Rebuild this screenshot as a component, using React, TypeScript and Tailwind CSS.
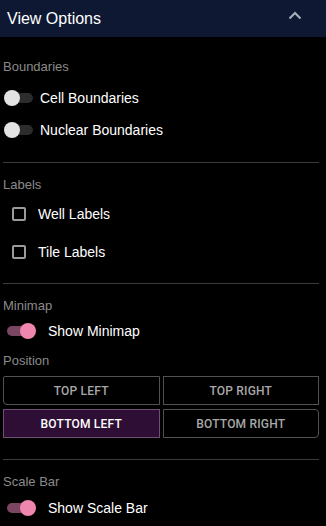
import { useState } from 'react';

const Toggle = ({ on, onClick }: { on: boolean; onClick: () => void }) => (
  <button onClick={onClick} className="relative w-[30px] h-[18px] shrink-0">
    <span
      className={`absolute left-[2px] top-[4px] w-[27px] h-[10px] rounded-full ${
        on ? 'bg-[#7b4662]' : 'bg-[#2c2c2c]'
      }`}
    />
    <span
      className={`absolute top-[1px] w-[16px] h-[16px] rounded-full ${
        on ? 'left-[15px] bg-[#ef86ae]' : 'left-0 bg-[#e3e3e3]'
      }`}
    />
  </button>
);

const Check = ({ checked, onClick }: { checked: boolean; onClick: () => void }) => (
  <button
    onClick={onClick}
    className={`w-[14px] h-[14px] rounded-[2px] border-2 shrink-0 ${
      checked ? 'border-[#ef86ae] bg-[#ef86ae]' : 'border-[#9a9a9a]'
    }`}
  />
);

const SectionLabel = ({ children }: { children: string }) => (
  <div className="h-[16px] leading-[16px] text-[13px] text-[#8a8a8a]">{children}</div>
);

const Divider = () => <div className="h-px bg-[#3b3b3b] mr-[4px]" />;

const positions = ['TOP LEFT', 'TOP RIGHT', 'BOTTOM LEFT', 'BOTTOM RIGHT'];

export default function App() {
  const [cell, setCell] = useState(false);
  const [nuclear, setNuclear] = useState(false);
  const [well, setWell] = useState(false);
  const [tile, setTile] = useState(false);
  const [minimap, setMinimap] = useState(true);
  const [scaleBar, setScaleBar] = useState(true);
  const [position, setPosition] = useState('BOTTOM LEFT');

  // odd corner rounding as in the original button group
  const corners: Record<string, string> = {
    'TOP LEFT': 'rounded-bl-[4px] rounded-tl-[2px]',
    'TOP RIGHT': '',
    'BOTTOM LEFT': '',
    'BOTTOM RIGHT': 'rounded-r-[4px]',
  };

  return (
    <div
      className="w-[326px] h-[526px] bg-black text-white overflow-hidden"
      style={{ fontFamily: '"Liberation Sans", Arial, sans-serif' }}
    >
      <div className="h-[37px] bg-[#0e1833] flex items-center justify-between pl-[7px] pr-[24px]">
        <span className="text-[16px] font-medium">View Options</span>
        <svg width="14" height="9" viewBox="0 0 14 9" className="mt-[-6px]">
          <polyline points="1.5,7.5 7,2 12.5,7.5" fill="none" stroke="#a9aebb" strokeWidth="2" />
        </svg>
      </div>

      <div className="pl-[3px] pr-[3px]">
        <div className="pt-[22px]">
          <SectionLabel>Boundaries</SectionLabel>
          <div className="mt-[11px] flex flex-col gap-[8px]">
            <div className="h-[24px] flex items-center gap-[6px] pl-[1px]">
              <Toggle on={cell} onClick={() => setCell(!cell)} />
              <span className="text-[14px]">Cell Boundaries</span>
            </div>
            <div className="h-[24px] flex items-center gap-[6px] pl-[1px]">
              <Toggle on={nuclear} onClick={() => setNuclear(!nuclear)} />
              <span className="text-[14px]">Nuclear Boundaries</span>
            </div>
          </div>
        </div>

        <div className="mt-[20px]">
          <Divider />
        </div>

        <div className="pt-[14px]">
          <SectionLabel>Labels</SectionLabel>
          <div className="mt-[9px] flex flex-col gap-[14px]">
            <div className="h-[24px] flex items-center gap-[12px] pl-[9px]">
              <Check checked={well} onClick={() => setWell(!well)} />
              <span className="text-[14px]">Well Labels</span>
            </div>
            <div className="h-[24px] flex items-center gap-[12px] pl-[9px]">
              <Check checked={tile} onClick={() => setTile(!tile)} />
              <span className="text-[14px]">Tile Labels</span>
            </div>
          </div>
        </div>

        <div className="mt-[19px]">
          <Divider />
        </div>

        <div className="pt-[14px]">
          <SectionLabel>Minimap</SectionLabel>
          <div className="mt-[5px] h-[24px] flex items-center gap-[13px] pl-[2px]">
            <Toggle on={minimap} onClick={() => setMinimap(!minimap)} />
            <span className="text-[14px]">Show Minimap</span>
          </div>
          <div className="mt-[10px]">
            <SectionLabel>Position</SectionLabel>
          </div>
          <div
            className="mt-[7px] grid grid-cols-2 gap-x-[3px] gap-y-[4px] mr-[4px]"
            style={{ fontFamily: 'Roboto, "Liberation Sans", sans-serif' }}
          >
            {positions.map((p) => {
              const active = p === position;
              return (
                <button
                  key={p}
                  onClick={() => setPosition(p)}
                  className={`h-[29px] border text-[12px] font-medium tracking-[0.2px] ${corners[p]} ${
                    active
                      ? 'bg-[#2f0e35] border-[#6d4f73] text-white'
                      : 'bg-black border-[#525252] text-[#a8a8a8]'
                  }`}
                >
                  {p}
                </button>
              );
            })}
          </div>
        </div>

        <div className="mt-[21px]">
          <Divider />
        </div>

        <div className="pt-[14px]">
          <SectionLabel>Scale Bar</SectionLabel>
          <div className="mt-[6px] h-[24px] flex items-center gap-[13px] pl-[2px]">
            <Toggle on={scaleBar} onClick={() => setScaleBar(!scaleBar)} />
            <span className="text-[14px]">Show Scale Bar</span>
          </div>
        </div>
      </div>
    </div>
  );
}
